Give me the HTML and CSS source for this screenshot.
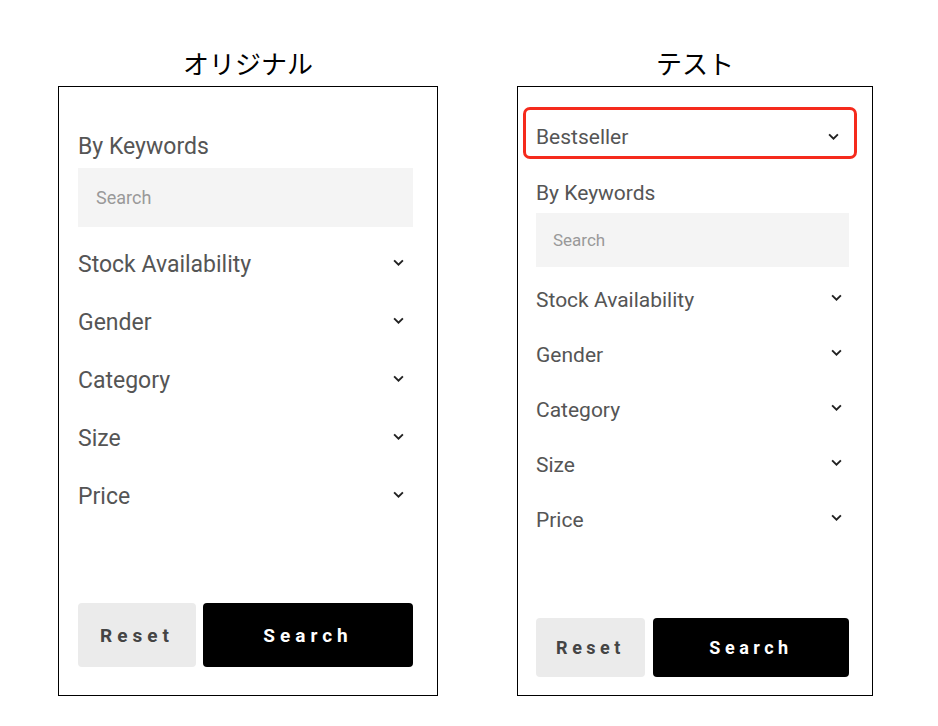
FILE: index.html
```html
<!DOCTYPE html>
<html lang="ja">
<head>
    <meta charset="UTF-8">
    <title>Filter</title>
    <link rel="stylesheet" href="styles.css">
</head>
<body>
<div class="page">
    <div class="col col_orig">
        <h2 class="title">オリジナル</h2>
        <div class="panel">
            <p class="label">By Keywords</p>
            <div class="search_box">Search</div>
            <ul class="filters">
                <li class="filter"><span>Stock Availability</span><svg class="chev" viewBox="0 0 10 6"><polyline points="1,1 5,5 9,1"/></svg></li>
                <li class="filter"><span>Gender</span><svg class="chev" viewBox="0 0 10 6"><polyline points="1,1 5,5 9,1"/></svg></li>
                <li class="filter"><span>Category</span><svg class="chev" viewBox="0 0 10 6"><polyline points="1,1 5,5 9,1"/></svg></li>
                <li class="filter"><span>Size</span><svg class="chev" viewBox="0 0 10 6"><polyline points="1,1 5,5 9,1"/></svg></li>
                <li class="filter"><span>Price</span><svg class="chev" viewBox="0 0 10 6"><polyline points="1,1 5,5 9,1"/></svg></li>
            </ul>
            <div class="btns">
                <button class="btn btn_reset">Reset</button>
                <button class="btn btn_search">Search</button>
            </div>
        </div>
    </div>
    <div class="col col_test">
        <h2 class="title">テスト</h2>
        <div class="panel">
            <div class="sort"><span>Bestseller</span><svg class="chev" viewBox="0 0 10 6"><polyline points="1,1 5,5 9,1"/></svg></div>
            <p class="label">By Keywords</p>
            <div class="search_box">Search</div>
            <ul class="filters">
                <li class="filter"><span>Stock Availability</span><svg class="chev" viewBox="0 0 10 6"><polyline points="1,1 5,5 9,1"/></svg></li>
                <li class="filter"><span>Gender</span><svg class="chev" viewBox="0 0 10 6"><polyline points="1,1 5,5 9,1"/></svg></li>
                <li class="filter"><span>Category</span><svg class="chev" viewBox="0 0 10 6"><polyline points="1,1 5,5 9,1"/></svg></li>
                <li class="filter"><span>Size</span><svg class="chev" viewBox="0 0 10 6"><polyline points="1,1 5,5 9,1"/></svg></li>
                <li class="filter"><span>Price</span><svg class="chev" viewBox="0 0 10 6"><polyline points="1,1 5,5 9,1"/></svg></li>
            </ul>
            <div class="btns">
                <button class="btn btn_reset">Reset</button>
                <button class="btn btn_search">Search</button>
            </div>
        </div>
    </div>
</div>
</body>
</html>
```

FILE: styles.css
```css
* {
    margin: 0;
    padding: 0;
    box-sizing: border-box;
}

body {
    background: #fff;
    font-family: Roboto, "Noto Sans CJK JP", sans-serif;
    color: #555;
}

.page {
    display: flex;
    gap: 79px;
    padding: 48px 0 0 58px;
}

.col {
    display: flex;
    flex-direction: column;
    align-items: center;
}

.col_orig {
    width: 380px;
}

.col_test {
    width: 356px;
}

.title {
    font-family: "Noto Sans CJK JP", sans-serif;
    font-weight: 400;
    font-size: 26px;
    line-height: 30px;
    color: #000;
    margin-bottom: 8px;
}

.panel {
    width: 100%;
    height: 610px;
    border: 1px solid #000;
    display: flex;
    flex-direction: column;
}

.filters {
    list-style: none;
}

.filter,
.sort {
    display: flex;
    align-items: center;
    justify-content: space-between;
}

.chev {
    display: block;
    width: 11px;
    height: 7px;
    fill: none;
    stroke: #222;
    stroke-width: 1.7;
}

.search_box {
    background: #f4f4f4;
    color: #999;
    display: flex;
    align-items: center;
}

.btns {
    margin-top: auto;
    display: flex;
}

.btn {
    border: 0;
    border-radius: 4px;
    font-family: Roboto, sans-serif;
    font-weight: 700;
}

.btn_reset {
    background: #ebebeb;
    color: #444;
}

.btn_search {
    background: #000;
    color: #fff;
}

/* left panel */
.col_orig .panel {
    padding: 45px 24px 28px 19px;
}

.col_orig .label {
    font-size: 23px;
    line-height: 30px;
}

.col_orig .search_box {
    margin-top: 6px;
    height: 59px;
    padding-left: 18px;
    font-size: 18px;
}

.col_orig .filters {
    margin-top: 8px;
}

.col_orig .filter {
    height: 58px;
    font-size: 23px;
    padding-right: 9px;
}

.col_orig .chev {
    margin-bottom: 4px;
}

.col_orig .btns {
    gap: 7px;
}

.col_orig .btn {
    height: 64px;
    font-size: 19px;
    letter-spacing: 5px;
}

.col_orig .btn_reset {
    width: 118px;
}

.col_orig .btn_search {
    flex: 1;
}

/* right panel */
.col_test .panel {
    padding: 20px 23px 18px 18px;
}

.col_test .sort {
    height: 52px;
    margin: 0 -8px 0 -13px;
    padding: 7px 15px 0 10px;
    border: 3px solid #f52a1c;
    border-radius: 7px;
    font-size: 21px;
}

.col_test .label {
    margin-top: 19px;
    font-size: 21px;
    line-height: 30px;
}

.col_test .search_box {
    margin-top: 5px;
    height: 54px;
    padding-left: 17px;
    font-size: 17px;
}

.col_test .filters {
    margin-top: 5px;
}

.col_test .filter {
    height: 55px;
    font-size: 21px;
    padding-right: 7px;
}

.col_test .filter .chev {
    margin-bottom: 4px;
}

.col_test .btns {
    gap: 8px;
}

.col_test .btn {
    height: 59px;
    font-size: 18px;
    letter-spacing: 4.5px;
}

.col_test .btn_reset {
    width: 109px;
}

.col_test .btn_search {
    flex: 1;
}
```
